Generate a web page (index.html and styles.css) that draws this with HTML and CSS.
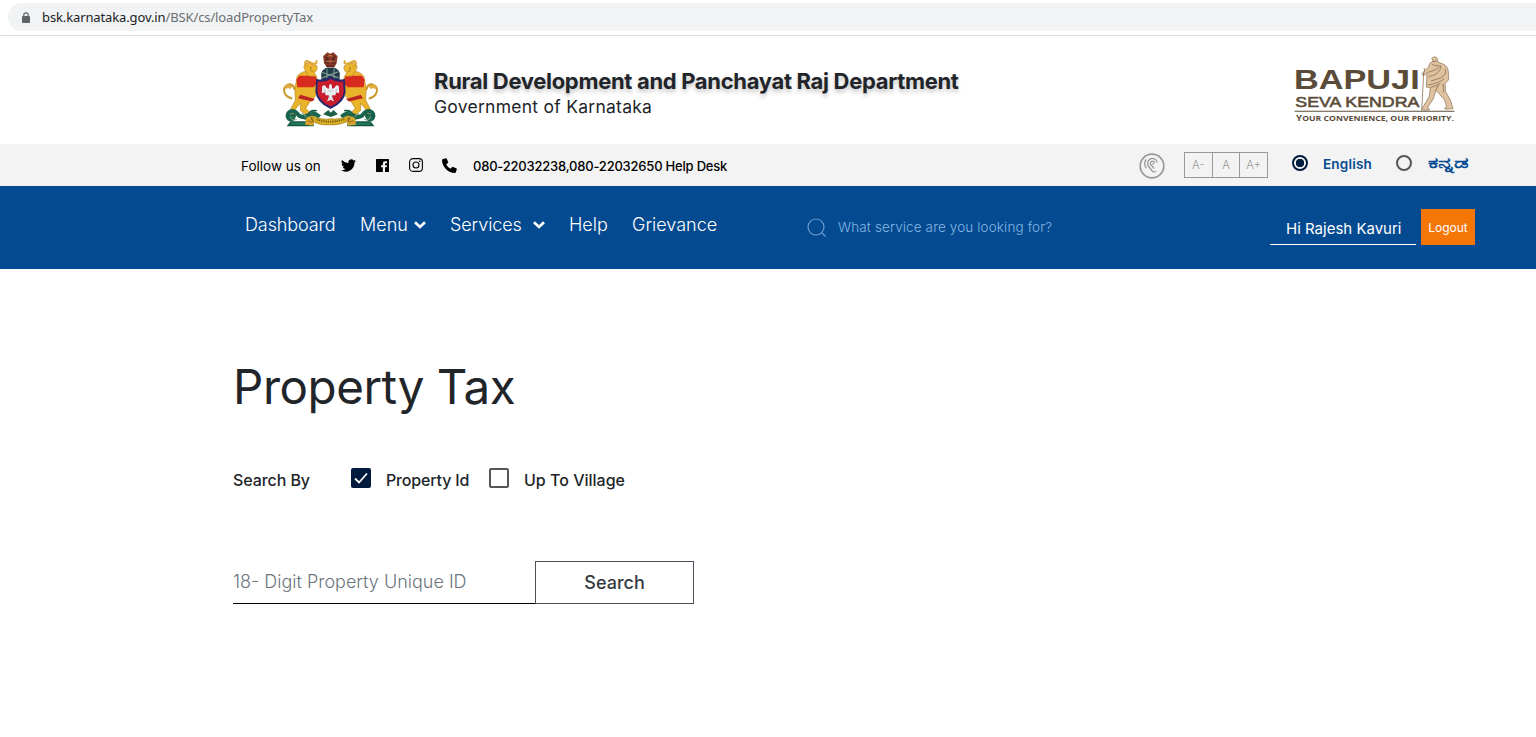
FILE: index.html
```html
<!DOCTYPE html>
<html lang="en">
<head>
<meta charset="utf-8">
<title>Property Tax</title>
<link rel="stylesheet" href="styles.css">
</head>
<body>
<div class="browser-bar">
  <div class="address">
    <svg class="lock" viewBox="0 0 8 11"><path d="M1.8 5V3a2.2 2.2 0 0 1 4.4 0v2" fill="none" stroke="#5f6368" stroke-width="1.2"/><rect y="4" width="8" height="7" rx="1" fill="#5f6368"/></svg>
    <span class="url"><span class="host">bsk.karnataka.gov.in</span>/BSK/cs/loadPropertyTax</span>
  </div>
</div>
<header class="masthead">
  <svg class="emblem" viewBox="0 0 360 270">
    <g transform="matrix(.965 0 0 1.06 3 -1.5)">
    <g id="supporter">
      <path d="M66 156C38 150 34 126 50 118c12-6 24 2 22 13" fill="none" stroke="#c99a2c" stroke-width="6"/>
      <path d="M45 119q12-7 22 3l-7 7q-9-5-16 2z" fill="#e0ae3c"/>
      <path d="M82 92Q98 76 117 80L139 90 148 108 165 104 168 115 144 124 139 148 120 166 108 183 120 195 111 203 92 190 91 169 75 187 81 203 67 205 61 186 76 160 74 128Z" fill="#e9b42b" stroke="#b98420" stroke-width="2"/>
      <path d="M88 91L138 91 145 109 133 124H82L79 102Z" fill="#d92a20"/>
      <path d="M91 145L137 157 128 164 84 155Z" fill="#bd2620"/>
      <path d="M108 78C96 64 106 52 122 57L143 64Q145 77 134 83L141 93 118 92Z" fill="#edb72e" stroke="#ba8422" stroke-width="2"/>
      <path d="M116 66C104 62 103 51 111 50C122 51 132 62 140 56Q144 52 139 48" fill="none" stroke="#dba637" stroke-width="6"/>
      <path d="M131 81l-9-7" fill="none" stroke="#c0902d" stroke-width="4"/>
      <circle cx="124" cy="69" r="2" fill="#503416"/>
      <path d="M151 208C126 181 102 225 82 199C68 184 45 195 53 210C60 222 76 210 68 202" fill="none" stroke="#19644f" stroke-width="12"/>
      <path d="M143 190q-22-4-28 12m9 1q-13 17-27 7m-20-3q-14-12-27 2M130 222H62l-9 10h78z" fill="#277b5e" stroke="#165744" stroke-width="4"/>
      <path d="M108 213q15-14 29 0l-6 20-25-3z" fill="#d7a52c"/>
      <path d="M124 208q8 5 5 14M113 219l17 4" stroke="#a27523" stroke-width="3"/>
      <path d="M62 211q7 9 18 3M96 197l13 9" fill="none" stroke="#7da078" stroke-width="3"/>
    </g>
    <use href="#supporter" transform="matrix(-1 0 0 1 370 0)"/>
    <path d="M165 56l-3-20 13-11 9 4 10-4 13 11-3 20-8 12h-22z" fill="#8e3929"/>
    <path d="M168 35q10 13 1 22m31-22q-10 13-1 22M177 32v27m15-27v27M172 64h25" fill="none" stroke="#55281f" stroke-width="4"/>
    <path d="M176 37q8-6 16 0M171 50h27" stroke="#cf7946" stroke-width="3" fill="none"/>
    <path d="M156 84Q164 65 185 69Q207 65 214 84L213 104H157Z" fill="#203d48"/>
    <path d="M159 82l51 15M159 97l50-17M174 71v32m22-32v32" stroke="#8ca4a0" stroke-width="3"/>
    <path d="M143 104Q167 108 185 97Q204 108 227 104L229 136Q226 165 185 182Q145 165 141 136Z" fill="#c91c2d" stroke="#25266f" stroke-width="6"/>
    <path d="M181 118q4-7 8 0l1 10 7-2q6-13 14-4l1 19-8-3-5 9-7-1-3 4 7 14-11-5-11 5 7-14-3-4-7 1-5-9-8 3 1-19q8-9 14 4l7 2z" fill="#e9edef"/>
    <path d="M165 129l5 10m35-10l-5 10M178 132l7 4 7-4M181 148l-2 10m10-10l2 10" fill="none" stroke="#aeb9c0" stroke-width="2.5"/>
    <path d="M126 204Q155 218 185 213Q216 217 241 203L235 222Q205 232 185 230Q154 232 133 222Z" fill="#d9ae22" stroke="#9d7920" stroke-width="2"/>
    <path d="M142 215q39 13 86-1" fill="none" stroke="#715b17" stroke-width="5" stroke-dasharray="4 3"/>
    <path d="M162 200l16-12 8 8 8-8 14 12-22 8z" fill="#205d47"/>
    </g>
  </svg>
  <div class="department">
    <h2 class="dept-name"><span>Rural Development and Panchayat Raj Department</span></h2>
    <div class="government"><span>Government of Karnataka</span></div>
  </div>
  <svg class="bapuji" viewBox="0 0 540 240">
    <g fill="#5b4c39" font-weight="700">
      <text x="27" y="118" font-family="'Liberation Sans', sans-serif" font-size="84" textLength="377" lengthAdjust="spacingAndGlyphs">BAPUJI</text>
      <text x="31" y="171" font-family="'Liberation Sans', sans-serif" font-weight="400" stroke="#5b4c39" stroke-width="1.6" font-size="42" textLength="372" lengthAdjust="spacingAndGlyphs">SEVA KENDRA</text>
      <text x="33" y="213" font-family="'Open Sans', sans-serif" font-size="22" textLength="474" lengthAdjust="spacingAndGlyphs"><tspan font-size="25">Y</tspan>OUR CONVENIENCE, OUR PRIORITY.</text>
      <path d="M29 182h479v3H29z"/>
    </g>
    <path d="M440 25q9-9 17 0l2 12q30 6 31 27l1 25-11 12 2 24 15 27 7 24-21 2-5-3 7-4-6-21-26-29-9 27-17 26 8 5-17 2-7-4 22-39 3-24-12-3 2-43-10 10-5-7 20-21q1-12 14-17z" fill="#dfc3a0" stroke="#866e51" stroke-width="2"/>
    <path d="M417 54q5 6-1 15l-6 115M430 67q23-5 38-20-2 26-37 33M441 42q8 9 22 4M481 57q5 18-14 27l-29 9M428 105q32-4 49-18M437 112q22-5 29-12M461 103l-10 20M474 101l2 26" fill="none" stroke="#8e7557" stroke-width="2.5"/>
    <path d="M443 33q5 4 12 0" stroke="#80684d" stroke-width="3" fill="none"/>
  </svg>
</header>
<div class="utility">
  <span class="follow"><span>Follow us on</span></span>
  <svg class="social twitter" viewBox="0 0 24 24"><path d="M24 4.6a10 10 0 0 1-2.8.8 5 5 0 0 0 2.1-2.7 10 10 0 0 1-3.1 1.2A4.9 4.9 0 0 0 11.8 8.4 14 14 0 0 1 1.7 3.2a4.9 4.9 0 0 0 1.5 6.6 5 5 0 0 1-2.2-.6 4.9 4.9 0 0 0 3.9 4.9 5 5 0 0 1-2.2.1 4.9 4.9 0 0 0 4.6 3.4A9.9 9.9 0 0 1 0 19.5 14 14 0 0 0 21.5 7.1 10 10 0 0 0 24 4.6z"/></svg>
  <svg class="social facebook" viewBox="0 0 14 14"><path fill-rule="evenodd" d="M.5 0h13q.5 0 .5.5v13q0 .5-.5.5H9.7V8.9h1.8l.3-2.2H9.7V5.5q0-1 1-1h1.2V2.4h-1.9Q7.3 2.4 7.3 5v1.7H5.5v2.2h1.8V14H.5q-.5 0-.5-.5V.5Q0 0 .5 0z"/></svg>
  <svg class="social instagram" viewBox="0 0 14 14"><g fill="none" stroke="#000" stroke-width="1.1"><rect x=".6" y=".6" width="12.8" height="12.8" rx="3.4"/><circle cx="7" cy="7" r="3"/></g><circle cx="10.8" cy="3.2" r=".8"/></svg>
  <svg class="social phone" viewBox="0 0 16 16"><path d="M.7 1.2L4 .2q.8-.1 1.1.6l1.4 3.4q.2.7-.3 1.2L4.5 6.8q1.5 3 4.7 4.7l1.4-1.7q.5-.5 1.2-.3l3.4 1.4q.7.4.6 1.1l-1 3.3q-.2.7-1 .7C6.5 16 0 9.5 0 2.2q0-.8.7-1z"/></svg>
  <span class="helpdesk"><span>080-22032238,080-22032650 Help Desk</span></span>
  <svg class="ear" viewBox="0 0 26 26"><g fill="none" stroke="#999" stroke-width="1.3"><circle cx="13" cy="13" r="11.8" stroke-width="1.7"/><path d="M18.3 9.5A4.9 4.9 0 1 0 9.7 13.5l3.2 4.2q1.8 2 4.1.5M15.8 10a2.3 2.3 0 1 0-3 2.7l2.4 3M7.2 6.5q-3.2 4.2.2 8.5"/></g><circle cx="14" cy="10.8" r=".9" fill="#999"/></svg>
  <div class="sizes"><button>A-</button><button>A</button><button>A+</button></div>
  <span class="radio checked"></span><span class="lang english"><span>English</span></span>
  <span class="radio"></span><span class="lang kannada" lang="kn"><span>ಕನ್ನಡ</span></span>
</div>
<nav class="navbar">
  <a class="nav dashboard"><span>Dashboard</span></a>
  <a class="nav menu"><span>Menu</span></a>
  <svg class="chevron first" viewBox="0 0 12 8"><path d="M1 1.2l5 4.8 5-4.8" fill="none" stroke="#fff" stroke-width="2.7"/></svg>
  <a class="nav services"><span>Services</span></a>
  <svg class="chevron second" viewBox="0 0 12 8"><path d="M1 1.2l5 4.8 5-4.8" fill="none" stroke="#fff" stroke-width="2.7"/></svg>
  <a class="nav help"><span>Help</span></a>
  <a class="nav grievance"><span>Grievance</span></a>
  <svg class="search-icon" viewBox="0 0 20 20"><g fill="none" stroke="#6f9ccb" stroke-width="1.2"><circle cx="9" cy="9" r="8"/><path d="M15 15l3.5 3.5"/></g></svg>
  <span class="query"><span>What service are you looking for?</span></span>
  <div class="user"><span>Hi Rajesh Kavuri</span></div>
  <button class="logout"><span>Logout</span></button>
</nav>
<main class="content">
  <h1 class="title"><span>Property Tax</span></h1>
  <div class="search-by">
    <span class="by-label"><span>Search By</span></span>
    <span class="check on"><svg viewBox="0 0 20 20"><path d="M4 10.5l4 4 8-9" fill="none" stroke="#fff" stroke-width="1.8"/></svg></span>
    <span class="option property"><span>Property Id</span></span>
    <span class="check"></span>
    <span class="option village"><span>Up To Village</span></span>
  </div>
  <div class="search-row">
    <div class="field"><span>18- Digit Property Unique ID</span></div>
    <button class="search"><span>Search</span></button>
  </div>
</main>
</body>
</html>
```
FILE: styles.css
```css
* { box-sizing: border-box; }
body { margin: 0; background: #fff; color: #212529; font-family: Inter, "Liberation Sans", sans-serif; white-space: nowrap; }
svg { display: block; flex: none; }
button { font-family: inherit; padding: 0; border-radius: 0; }
h1, h2 { margin: 0; }
.browser-bar { height: 36px; padding: 3px 0 0 8px; border-bottom: 1px solid #dadce0; }
.address { display: flex; align-items: center; height: 28px; padding-left: 14px; background: #f1f3f4; border-radius: 14px 0 0 14px; }
.lock { width: 8px; height: 11px; }
.url { margin-left: 12px; font: 13px/20px "Noto Sans", sans-serif; color: #6b6f73; letter-spacing: -.12px; }
.host { color: #202124; }
.masthead { display: flex; height: 108px; }
.emblem { width: 120px; height: 90px; margin: 8px 0 0 270px; }
.department { width: 530px; margin: 32px 0 0 44px; }
.dept-name { height: 27px; font-size: 22px; line-height: 27px; font-weight: 700; letter-spacing: -.32px; text-shadow: 0 3px 4px rgba(0,0,0,.24); }
.government { font-size: 17.5px; line-height: 24px; letter-spacing: .26px; }
.bapuji { width: 180px; height: 80px; margin: 14px 0 0 321px; }
.utility { display: flex; height: 42px; padding-left: 241px; background: #f3f3f3; color: #000; }
.follow { width: 100px; font-size: 13.5px; line-height: 44px; }
.social { margin-top: 15px; width: 14px; height: 14px; }
.twitter { width: 15px; height: 15px; margin-top: 14px; }
.facebook { width: 13px; height: 13px; margin-left: 20px; }
.instagram { margin: 14px 0 0 20px; }
.phone { width: 15px; height: 15px; margin: 14px 0 0 19px; }
.helpdesk { width: 666px; margin-left: 16px; font-size: 13px; font-weight: 500; line-height: 44px; letter-spacing: -.21px; }
.ear { width: 26px; height: 26px; margin-top: 9px; }
.sizes { display: flex; width: 84px; height: 26px; margin: 8px 0 0 19px; border: 1px solid #999; }
.sizes button { flex: 1; border: 0; background: none; color: #999; font-size: 11.5px; font-weight: 300; }
.sizes button + button { border-left: 1px solid #999; }
.radio { width: 16px; height: 16px; margin: 11px 0 0 24px; border: 2px solid #555; border-radius: 50%; }
.radio.checked { border-color: #001b3d; background: radial-gradient(circle, #001b3d 0 4px, transparent 4.5px); }
.lang { color: #034a90; font-size: 13.5px; font-weight: 600; line-height: 40px; }
.english { width: 49px; margin-left: 15px; letter-spacing: .2px; }
.kannada { margin-left: 16px; font-size: 15.5px; line-height: 38px; }
.kannada span { display: inline-block; transform: scaleX(1.44); transform-origin: left; }
.navbar { display: flex; height: 83px; padding-left: 245px; background: #044a90; color: #fff; }
.nav { font-size: 18px; font-weight: 300; line-height: 78px; }
.dashboard { width: 115px; letter-spacing: -.1px; }
.menu { width: 54px; }
.chevron { width: 12px; height: 8px; margin-top: 35px; }
.first { margin-right: 24px; }
.services { width: 83px; letter-spacing: -.1px; }
.second { margin-right: 24px; }
.help { width: 63px; }
.grievance { width: 175px; }
.search-icon { width: 20px; height: 20px; margin-top: 32px; }
.query { width: 432px; margin-left: 11px; color: #84b7e4; font-size: 13.5px; font-weight: 300; line-height: 82px; letter-spacing: .13px; }
.user { width: 146px; height: 27px; margin-top: 32px; padding-left: 16px; border-bottom: 1px solid #fff; font-size: 15px; line-height: 22px; }
.logout { width: 54px; height: 36px; margin: 23px 0 0 5px; border: 0; background: #f47607; color: #fff; font-size: 12px; }
.content { padding: 88px 0 0 233px; }
.title { height: 62px; font-size: 47.5px; line-height: 60px; font-weight: 400; letter-spacing: -.45px; }
.search-by { display: flex; height: 24px; margin-top: 49px; font-size: 16px; font-weight: 500; line-height: 25px; }
.by-label { width: 118px; letter-spacing: -.08px; }
.check { width: 20px; height: 20px; border: 2px solid #555; border-radius: 2px; }
.check.on { border: 0; background: #001b3d; }
.option { margin-left: 15px; }
.property { width: 103px; letter-spacing: -.17px; }
.search-row { display: flex; height: 43px; margin-top: 69px; }
.field { width: 302px; border-bottom: 1px solid #000; color: #6c757d; font-size: 18px; font-weight: 300; line-height: 41px; }
.search { width: 159px; border: 1px solid #495057; background: #fff; color: #343a40; font-size: 18px; font-weight: 500; }
```
